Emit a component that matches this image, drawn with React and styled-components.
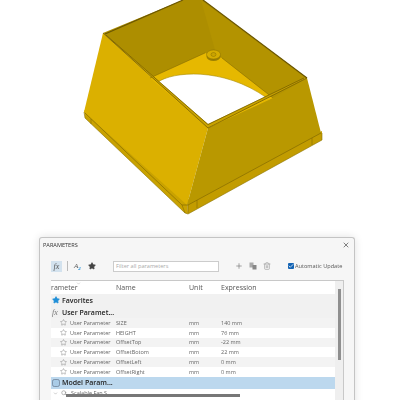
import React from "react";
import styled, { createGlobalStyle } from "styled-components";
import { Star, Plus, Trash2, X, Check, ChevronDown, Search } from "lucide-react";

const params = [
  { name: "SIZE", value: "140 mm" },
  { name: "HEIGHT", value: "76 mm" },
  { name: "OffsetTop", value: "-22 mm" },
  { name: "OffsetBotom", value: "22 mm" },
  { name: "OffsetLeft", value: "0 mm" },
  { name: "OffsetRight", value: "0 mm" },
];

const Model = () => (
  <ModelSvg viewBox="0 0 400 236" width="400" height="236">
    {/* skirt */}
    <polygon points="84,110 187,200 188,214 185,213 85,118" fill="#c9a200" />
    <polygon points="187,200 322,131 322,140 188,214" fill="#c29c00" />
    {/* outer faces */}
    <polygon points="103,33 208,128 187,205 84,112" fill="#dbb000" />
    <polygon points="208,128 307,78 321,133 187,205" fill="#b99800" />
    <polyline points="84,112 85,118 185,213 188,214 322,140 322,133" fill="none" stroke="#8c7200" strokeWidth="0.6" />
    <polyline points="85,113 182,205 188,205 321,133" fill="none" stroke="#6b5600" strokeWidth="0.5" />
    <path d="M91,119 L91,124 M182,205 L185,213 M188,205 L188,213 M197,200 L197,208 M312,138 L312,145" stroke="#7a6300" strokeWidth="0.5" />
    {/* inner walls */}
    <polygon points="103,33 183,0 203,0 307,78 208,128" fill="#ad8e00" />
    <polygon points="201,0 307,78 273,98 222,58 215,50" fill="#b39300" />
    {/* flange and opening */}
    <polygon points="150,78 205,53 222,58 273,98 208,128" fill="#e6b800" />
    <path d="M158,82 C172,72 222,66 267,98 L208,125 Z" fill="#fff" />
    <path d="M158,82 C172,72 222,66 267,98" fill="none" stroke="#a88900" strokeWidth="0.6" />
    <path d="M150,78 L205,53 M222,58 L273,98" fill="none" stroke="#7a6300" strokeWidth="0.5" />
    {/* rim */}
    <polygon points="103,33 208,128 307,78 304,78 208,124 106,35" fill="#c9a300" />
    <polyline points="103,33 208,128 307,78" fill="none" stroke="#6b5600" strokeWidth="0.7" />
    <polyline points="106,35 208,124.5 304,78" fill="none" stroke="#6b5600" strokeWidth="0.7" />
    <polyline points="105,34 183,0" fill="none" stroke="#6b5600" strokeWidth="1.2" />
    <polyline points="203,0 307,78" fill="none" stroke="#6b5600" strokeWidth="1.2" />
    {/* boss */}
    <ellipse cx="213.5" cy="56.5" rx="7" ry="4.5" fill="#9c8000" />
    <ellipse cx="213.5" cy="54.5" rx="7" ry="4.5" fill="#d6ad00" stroke="#7a6300" strokeWidth="0.4" />
    <ellipse cx="213.5" cy="54.5" rx="2.5" ry="2" fill="#c9a300" stroke="#7a6300" strokeWidth="0.4" />
  </ModelSvg>
);

export default function App() {
  return (
    <Page>
      <GlobalStyle />
      <Model />
      <Dialog>
        <TitleBar>
          <Title>PARAMETERS</Title>
          <X size={8} color="#444" strokeWidth={2} />
        </TitleBar>
        <Toolbar>
          <FxButton>fx</FxButton>
          <Separator />
          <AIcon>A<sub>2</sub></AIcon>
          <Star size={8} fill="#444" color="#444" />
          <Filter>Filter all parameters</Filter>
          <ToolIcons>
            <Plus size={8} color="#777" strokeWidth={2} />
            <CopyIcon viewBox="0 0 8 8" width="8" height="8">
              <rect x="0.5" y="0.5" width="4" height="5" fill="#aaa" />
              <rect x="3.5" y="3" width="4" height="4.5" fill="#888" />
            </CopyIcon>
            <Trash2 size={8} color="#aaa" strokeWidth={2.4} />
          </ToolIcons>
          <AutoUpdate>
            <CheckBox><Check size={6} color="#fff" strokeWidth={3} /></CheckBox>
            Automatic Update
          </AutoUpdate>
        </Toolbar>
        <Table>
          <SortCaret><ChevronDown size={5} color="#aaa" strokeWidth={2} /></SortCaret>
          <TableBody>
            <HeaderRow>
              <ClippedHead>Parameter</ClippedHead>
              <span>Name</span>
              <span>Unit</span>
              <span>Expression</span>
            </HeaderRow>
            <GroupRow>
              <Star size={8} fill="#1f8fd8" color="#1f8fd8" />
              Favorites
            </GroupRow>
            <GroupRow>
              <FxMark>fx</FxMark>
              User Paramet...
            </GroupRow>
            {params.map((p, i) => (
              <ParamRow key={p.name} $odd={i % 2 === 1}>
                <ParamType>
                  <Star size={7} color="#777" strokeWidth={1.5} />
                  User Parameter
                </ParamType>
                <span>{p.name}</span>
                <span>mm</span>
                <span>{p.value}</span>
              </ParamRow>
            ))}
            <GroupRow $selected>
              <ModelIcon viewBox="0 0 8 8" width="8" height="8">
                <rect x="0.5" y="0.5" width="7" height="7" rx="1.8" fill="#a9cbe6" stroke="#5a6a80" strokeWidth="0.6" />
              </ModelIcon>
              Model Param...
            </GroupRow>
            <SubRow>
              <ChevronDown size={5} color="#888" strokeWidth={2} />
              <Search size={6} color="#777" strokeWidth={2} />
              <SubLabel>Scalable Fan S</SubLabel>
            </SubRow>
          </TableBody>
          <ScrollTrack>
            <ScrollThumb />
          </ScrollTrack>
          <HScrollThumb />
        </Table>
      </Dialog>
    </Page>
  );
}

const GlobalStyle = createGlobalStyle`
  html, body {
    margin: 0;
    padding: 0;
    background: #fff;
    overflow: hidden;
  }
`;

const Page = styled.div`
  width: 400px;
  height: 400px;
  overflow: hidden;
  font-family: "Open Sans", "Noto Sans", sans-serif;
  background: #fff;
`;

const ModelSvg = styled.svg`
  display: block;
  margin-bottom: 1px;
`;

const Dialog = styled.div`
  width: 316px;
  height: 175px;
  margin-left: 39px;
  box-sizing: border-box;
  padding: 0 10px 0 11px;
  background: #f6f6f6;
  border: 1px solid #c4c4c4;
  border-bottom: 0;
  border-radius: 3px 3px 0 0;
  box-shadow: 0 0 8px rgba(0, 0, 0, 0.12);
  overflow: hidden;
  filter: blur(0.25px);
`;

const TitleBar = styled.div`
  display: flex;
  align-items: center;
  justify-content: space-between;
  height: 11px;
  margin: 0 -6px 0 -8px;
  padding-top: 1px;
`;

const Title = styled.span`
  font-size: 5.6px;
  color: #333;
`;

const Toolbar = styled.div`
  display: flex;
  align-items: center;
  height: 12px;
  margin-top: 10px;
`;

const FxButton = styled.span`
  width: 11px;
  height: 11px;
  display: flex;
  align-items: center;
  justify-content: center;
  background: #d3e2ee;
  font: italic 8px "Liberation Serif", serif;
  color: #555;
`;

const Separator = styled.span`
  width: 1px;
  height: 10px;
  margin: 0 6px 0 5px;
  background: #bbb;
`;

const AIcon = styled.span`
  width: 9px;
  margin-right: 5px;
  font: italic 7px "Liberation Serif", serif;
  color: #555;

  sub {
    font-size: 5px;
    color: #1f8fd8;
    font-weight: bold;
    line-height: 0;
  }
`;

const Filter = styled.div`
  width: 106px;
  height: 11px;
  box-sizing: border-box;
  margin-left: 17px;
  padding-left: 2px;
  background: #fff;
  border: 1px solid #ccc;
  font-size: 5.6px;
  line-height: 9px;
  color: #aaa;
`;

const ToolIcons = styled.div`
  display: flex;
  align-items: center;
  gap: 6px;
  margin-left: 16px;
`;

const CopyIcon = styled.svg`
  display: block;
`;

const AutoUpdate = styled.div`
  display: flex;
  align-items: center;
  gap: 1px;
  margin-left: 17px;
  font-size: 5.6px;
  color: #555;
  white-space: nowrap;
`;

const CheckBox = styled.span`
  width: 6px;
  height: 6px;
  display: flex;
  align-items: center;
  justify-content: center;
  background: #1464b4;
  border-radius: 1px;
`;

const Table = styled.div`
  position: relative;
  display: flex;
  height: 120px;
  margin-top: 8px;
  background: #fff;
  border-top: 1px solid #c8c8c8;
  border-right: 1px solid #c8c8c8;
`;

const SortCaret = styled.span`
  position: absolute;
  left: 25px;
  top: -1px;
  line-height: 0;
`;

const TableBody = styled.div`
  flex: 1;
  display: flex;
  flex-direction: column;
  min-width: 0;
  overflow: hidden;
`;

const rowGrid = `
  display: grid;
  grid-template-columns: 65px 73px 32px 1fr;
  align-items: center;
`;

const HeaderRow = styled.div`
  ${rowGrid}
  height: 13px;
  font-size: 7px;
  color: #555;
  background: #fff;
`;

const ClippedHead = styled.span`
  overflow: hidden;
  text-indent: -8px;
  white-space: nowrap;
`;

const GroupRow = styled.div`
  display: flex;
  align-items: center;
  gap: 2px;
  height: 12px;
  padding-left: 1px;
  font-size: 7px;
  font-weight: 600;
  color: #222;
  background: ${(p) => (p.$selected ? "#bcd8ee" : "#f1f1f1")};
`;

const FxMark = styled.span`
  width: 8px;
  font: italic 8px "Liberation Serif", serif;
  color: #777;
`;

const ModelIcon = styled.svg`
  display: block;
`;

const ParamRow = styled.div`
  ${rowGrid}
  height: 9.8px;
  font-size: 5.5px;
  color: #666;
  background: ${(p) => (p.$odd ? "#fff" : "#f3f3f3")};
`;

const ParamType = styled.span`
  display: flex;
  align-items: center;
  gap: 3px;
  padding-left: 9px;
  white-space: nowrap;
`;

const SubRow = styled.div`
  display: flex;
  align-items: center;
  gap: 3px;
  height: 9px;
  padding-left: 2px;
  font-size: 5.5px;
  color: #666;
`;

const SubLabel = styled.span`
  margin-left: 1px;
`;

const ScrollTrack = styled.div`
  width: 8px;
  background: #efefef;
  padding: 8px 2px 0 3px;
  box-sizing: border-box;
`;

const ScrollThumb = styled.div`
  width: 3px;
  height: 71px;
  background: #8f8f8f;
`;

const HScrollThumb = styled.div`
  position: absolute;
  left: 15px;
  top: 113px;
  width: 174px;
  height: 3px;
  background: #777;
`;
